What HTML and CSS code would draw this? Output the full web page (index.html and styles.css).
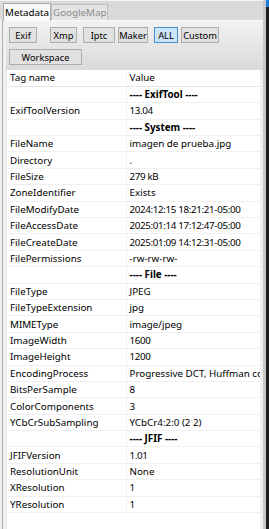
FILE: index.html
```html
<!DOCTYPE html>
<html lang="en">
<head>
    <meta charset="UTF-8">
    <title>Metadata</title>
    <link rel="stylesheet" href="styles.css">
</head>
<body>

<div class="window">
    <div class="main">
        <div class="tabs">
            <div class="tab active">Metadata</div>
            <div class="tab">GoogleMap</div>
        </div>
        <div class="page">
            <div class="toolbar">
                <div class="btn-row">
                    <button class="btn w-exif">Exif</button>
                    <button class="btn w-xmp">Xmp</button>
                    <button class="btn w-iptc">Iptc</button>
                    <button class="btn w-maker">Maker</button>
                    <button class="btn w-all checked">ALL</button>
                    <button class="btn w-custom">Custom</button>
                </div>
                <div class="btn-row">
                    <button class="btn w-workspace">Workspace</button>
                </div>
            </div>
            <div class="grid">
                <table class="tags">
                    <tr class="head"><td>Tag name</td><td>Value</td></tr>
                    <tr><td></td><td class="group">---- ExifTool ----</td></tr>
                    <tr><td>ExifToolVersion</td><td class="num">13.04</td></tr>
                    <tr><td></td><td class="group">---- System ----</td></tr>
                    <tr><td>FileName</td><td>imagen de prueba.jpg</td></tr>
                    <tr><td>Directory</td><td>.</td></tr>
                    <tr><td>FileSize</td><td class="num">279 kB</td></tr>
                    <tr><td>ZoneIdentifier</td><td>Exists</td></tr>
                    <tr><td>FileModifyDate</td><td class="num">2024:12:15 18:21:21-05:00</td></tr>
                    <tr><td>FileAccessDate</td><td class="num">2025:01:14 17:12:47-05:00</td></tr>
                    <tr><td>FileCreateDate</td><td class="num">2025:01:09 14:12:31-05:00</td></tr>
                    <tr><td>FilePermissions</td><td>-rw-rw-rw-</td></tr>
                    <tr><td></td><td class="group">---- File ----</td></tr>
                    <tr><td>FileType</td><td>JPEG</td></tr>
                    <tr><td>FileTypeExtension</td><td>jpg</td></tr>
                    <tr><td>MIMEType</td><td>image/jpeg</td></tr>
                    <tr><td>ImageWidth</td><td class="num">1600</td></tr>
                    <tr><td>ImageHeight</td><td class="num">1200</td></tr>
                    <tr><td>EncodingProcess</td><td class="clip">Progressive DCT, Huffman coding</td></tr>
                    <tr><td>BitsPerSample</td><td class="num">8</td></tr>
                    <tr><td>ColorComponents</td><td class="num">3</td></tr>
                    <tr><td>YCbCrSubSampling</td><td>YCbCr4:2:0 (2 2)</td></tr>
                    <tr><td></td><td class="group">---- JFIF ----</td></tr>
                    <tr><td>JFIFVersion</td><td class="num">1.01</td></tr>
                    <tr><td>ResolutionUnit</td><td>None</td></tr>
                    <tr><td>XResolution</td><td class="num">1</td></tr>
                    <tr><td>YResolution</td><td class="num">1</td></tr>
                </table>
            </div>
        </div>
    </div>
    <div class="edge"></div>
</div>

</body>
</html>
```

FILE: styles.css
```css
body {
    margin: 0;
    background: #f0f0f0;
    font-family: "Noto Sans", "Open Sans", sans-serif;
    font-size: 9.8px;
    color: #000;
}
.window {
    display: flex;
    width: 269px;
    height: 529px;
    overflow: hidden;
}
.main {
    flex: 1;
    display: flex;
    flex-direction: column;
    min-width: 0;
    background: #f0f0f0;
}
.edge {
    width: 3px;
    background: linear-gradient(#1e7bd8 0, #1e7bd8 7px, #1c1c1c 7px);
    border-left: 3px solid #c8c8c8;
}
.tabs {
    display: flex;
    align-items: flex-end;
    height: 20px;
    padding: 3px 0 0 3px;
    box-sizing: border-box;
    background: #d9d9d9;
    border-top: 1px solid #f4f4f4;
}
.tab {
    height: 15px;
    line-height: 15px;
    padding: 0 1px;
    color: #8c8c8c;
    background: #e4e4e4;
    border: 1px solid #bdbdbd;
    border-bottom: none;
}
.tab.active {
    height: 17px;
    line-height: 17px;
    color: #000;
    background: #f9f9f9;
    border-color: #acacac;
    position: relative;
    top: 1px;
}
.page {
    flex: 1;
    display: flex;
    flex-direction: column;
    border-left: 1px solid #acacac;
    margin-left: 2px;
    padding-left: 3px;
    border-top: 1px solid #fafafa;
}
.toolbar {
    height: 49px;
    padding: 6px 0 0 3px;
    box-sizing: border-box;
    background: linear-gradient(#f2f2f2, #dadada);
}
.btn-row {
    display: flex;
    gap: 3px;
    margin-bottom: 6px;
}
.btn {
    height: 16px;
    padding: 0;
    font: inherit;
    font-size: 9.3px;
    color: #000;
    background: #e1e1e1;
    border: 1px solid #adadad;
    box-sizing: border-box;
}
.btn.checked {
    background: #cce4f7;
    border-color: #4a8fd0;
}
.w-exif { width: 28px; margin-right: 10px; }
.w-xmp { width: 27px; margin-right: 3px; }
.w-iptc { width: 32px; }
.w-maker { width: 30px; }
.w-all { width: 24px; margin-left: 3px; }
.w-custom { width: 38px; }
.w-workspace { width: 73px; }
.grid {
    flex: 1;
    background: #fff;
    margin-right: 3px;
    border-left: 1px solid #e6e6e6;
}
.tags {
    width: 100%;
    border-collapse: collapse;
    table-layout: fixed;
}
.tags td {
    height: 16.4px;
    padding: 0 0 0 3px;
    border-bottom: 1px solid #f0f0f0;
    white-space: nowrap;
    overflow: hidden;
    box-sizing: border-box;
    line-height: 15px;
}
.tags td:first-child {
    width: 119px;
    border-right: 1px solid #f0f0f0;
}
.tags .head td {
    border-bottom: 1px solid #e5e5e5;
}
.tags td.group {
    font-weight: bold;
}
.tags td.num {
    letter-spacing: -0.35px;
}
.tags td.clip {
    text-overflow: clip;
}
```
